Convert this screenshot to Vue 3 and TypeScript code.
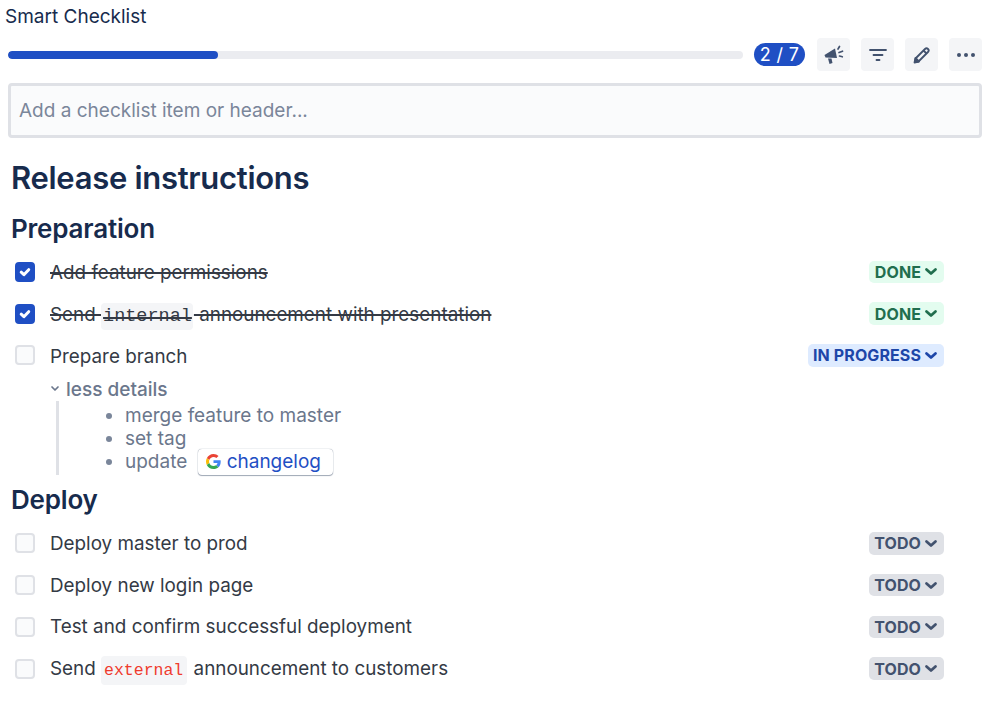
<script setup lang="ts">
interface Item { text?: string; before?: string; code?: string; after?: string; codeRed?: boolean; done?: boolean; status: string; kind: string }
const prep: Item[] = [
  { text: 'Add feature permissions', done: true, status: 'DONE', kind: 'done' },
  { before: 'Send ', code: 'internal', after: ' announcement with presentation', done: true, status: 'DONE', kind: 'done' },
  { text: 'Prepare branch', status: 'IN PROGRESS', kind: 'progress' },
]
const deploy: Item[] = [
  { text: 'Deploy master to prod', status: 'TODO', kind: 'todo' },
  { text: 'Deploy new login page', status: 'TODO', kind: 'todo' },
  { text: 'Test and confirm successful deployment', status: 'TODO', kind: 'todo' },
  { before: 'Send ', code: 'external', after: ' announcement to customers', codeRed: true, status: 'TODO', kind: 'todo' },
]
</script>

<template>
  <div class="page">
    <div class="title">Smart Checklist</div>
    <div class="toolbar">
      <div class="track"><div class="fill" :style="{ width: (2 / 7) * 100 + '%' }"></div></div>
      <span class="count">2 / 7</span>
      <button class="tool">
        <svg width="22" height="22" viewBox="0 0 22 22" fill="#42526e">
          <path d="M1.500 11 12 4.500l2 9.500-11.500-.5z" />
          <path d="M5 14.500h3.500l1 4.500-3 1z" />
          <path d="M15 5 16.500 2.500M16 8.500l3.500-1.300M16.500 12l2.800.8" stroke="#42526e" stroke-width="1.700" stroke-linecap="round" fill="none" />
        </svg>
      </button>
      <button class="tool">
        <svg width="22" height="22" viewBox="0 0 22 22" fill="none" stroke="#42526e" stroke-width="1.800" stroke-linecap="round">
          <path d="M3 6h16M6.500 11h9M9.500 16h3" />
        </svg>
      </button>
      <button class="tool">
        <svg width="22" height="22" viewBox="0 0 22 22" fill="none" stroke="#42526e" stroke-width="1.800" stroke-linejoin="round">
          <path d="M4.500 14.500 14 5a2 2 0 0 1 3 3l-9.500 9.500-3.500.5z" />
          <path d="m12.500 6.500 3 3" />
          <path d="M3.500 18.500 8 17.500 4.500 14z" fill="#42526e" />
        </svg>
      </button>
      <button class="tool">
        <svg width="22" height="22" viewBox="0 0 22 22" fill="#42526e">
          <circle cx="4" cy="11" r="2" /><circle cx="11" cy="11" r="2" /><circle cx="18" cy="11" r="2" />
        </svg>
      </button>
    </div>
    <div class="entry">Add a checklist item or header...</div>

    <h1 class="h1">Release instructions</h1>
    <h2 class="h2">Preparation</h2>
    <div v-for="item in prep" :key="item.status + (item.text || item.code)" class="row">
      <span class="box" :class="{ checked: item.done }">
        <svg v-if="item.done" width="14" height="14" viewBox="0 0 14 14" fill="none" stroke="#fff" stroke-width="3" stroke-linecap="round" stroke-linejoin="round">
          <path d="m3.200 7.200 2.700 2.500 4.800-5" />
        </svg>
      </span>
      <span class="label lowered" :class="{ struck: item.done }">
        <template v-if="item.text">{{ item.text }}</template>
        <template v-else>{{ item.before }}<code class="code">{{ item.code }}</code>{{ item.after }}</template>
      </span>
      <span class="status" :class="item.kind">{{ item.status }}
        <svg class="chev" width="14" height="9" viewBox="0 0 14 9" fill="none" stroke="currentColor" stroke-width="2.800" stroke-linecap="round" stroke-linejoin="round"><path d="m2.500 2.500 4.500 4 4.500-4" /></svg>
      </span>
    </div>
    <div class="details">
      <div class="toggle">
        <svg width="10" height="8" viewBox="0 0 10 8" fill="none" stroke="#6b778c" stroke-width="1.700" stroke-linecap="round" stroke-linejoin="round"><path d="m2 2 3 3 3-3" /></svg>
        <span>less details</span>
      </div>
      <ul class="list">
        <li>merge feature to master</li>
        <li>set tag</li>
        <li>update <span class="chip">
          <svg width="15" height="15" viewBox="0 0 48 48">
            <path fill="#EA4335" d="M24 9.500c3.500 0 6.700 1.200 9.200 3.600l6.900-6.900C35.900 2.400 30.500 0 24 0 14.600 0 6.500 5.400 2.600 13.200l8 6.200C12.500 13.700 17.800 9.500 24 9.500z" />
            <path fill="#4285F4" d="M47 24.500c0-1.600-.1-3.100-.4-4.500H24v9h12.900c-.6 3-2.200 5.500-4.700 7.200l7.700 6C44.400 38 47 31.800 47 24.500z" />
            <path fill="#FBBC05" d="M10.600 28.600c-.5-1.500-.8-3-.8-4.600s.3-3.100.8-4.600l-8-6.200C.9 16.500 0 20.100 0 24s.9 7.500 2.600 10.800z" />
            <path fill="#34A853" d="M24 48c6.500 0 11.900-2.100 15.900-5.800l-7.700-6c-2.200 1.500-4.900 2.300-8.200 2.300-6.200 0-11.500-4.200-13.400-9.900l-8 6.200C6.500 42.600 14.600 48 24 48z" />
          </svg>
          <span>changelog</span></span></li>
      </ul>
    </div>
    <h2 class="h2 deploy">Deploy</h2>
    <div v-for="item in deploy" :key="item.text || item.code" class="row">
      <span class="box"></span>
      <span class="label">
        <template v-if="item.text">{{ item.text }}</template>
        <template v-else>{{ item.before }}<code class="code red">{{ item.code }}</code>{{ item.after }}</template>
      </span>
      <span class="status" :class="item.kind">{{ item.status }}
        <svg class="chev" width="14" height="9" viewBox="0 0 14 9" fill="none" stroke="currentColor" stroke-width="2.800" stroke-linecap="round" stroke-linejoin="round"><path d="m2.500 2.500 4.500 4 4.500-4" /></svg>
      </span>
    </div>
  </div>
</template>

<style scoped>
.page { width: 999px; height: 710px; overflow: hidden; box-sizing: border-box; padding: 5px 17px 0 8px; font-family: Inter, "Liberation Sans", sans-serif; color: #172b4d; background: #fff; }
.title { margin-left: -3px; font-size: 19px; line-height: 24px; color: #172b4d; }
.toolbar { display: flex; align-items: center; margin-top: 9px; height: 33px; }
.track { flex: none; width: 735px; height: 8px; border-radius: 4px; background: #ebecf0; overflow: hidden; }
.fill { height: 100%; background: #1f4fc4; border-radius: 4px; }
.count { flex: none; margin-left: 11px; margin-right: 12px; width: 51px; height: 23px; border-radius: 12px; background: #1f4fc4; color: #fff; font-size: 18px; line-height: 23px; letter-spacing: 0.300px; text-align: center; }
.tool { flex: none; width: 33px; height: 33px; padding: 0; margin-right: 11px; border: 0; border-radius: 4px; background: #f4f5f7; display: flex; align-items: center; justify-content: center; }
.tool:last-child { margin-right: 0; }
.entry { margin-top: 12px; width: 974px; height: 55px; box-sizing: border-box; border: 3px solid #dfe1e6; border-radius: 4px; background: #fafbfc; padding-left: 8px; color: #7a869a; font-size: 19px; line-height: 49px; }
.h1 { margin: 20px 0 0 3px; font-size: 31px; line-height: 40px; font-weight: 600; letter-spacing: -0.300px; color: #172b4d; }
.h2 { margin: 13px 0 0 3px; font-size: 26px; line-height: 36px; font-weight: 600; letter-spacing: -0.200px; color: #172b4d; }
.row { display: flex; align-items: center; height: 41.800px; width: 936px; font-size: 18.850px; color: #343a45; }
.h2 + .row { margin-top: 4px; }
.box { flex: none; margin-left: 7px; width: 20px; height: 20px; box-sizing: border-box; border: 2px solid #dfe1e6; border-radius: 4px; background: #fafbfc; display: flex; align-items: center; justify-content: center; }
.box.checked { background: #1f4fc4; border-color: #1f4fc4; }
.label { margin-left: 15px; flex: 1; white-space: pre; }
.lowered { padding-top: 2px; }
.struck { text-decoration: line-through; text-decoration-thickness: 1.500px; }
.code { font-family: "Liberation Mono", monospace; font-size: 18.500px; font-weight: 400; background: #f4f5f7; border-radius: 4px; padding: 3px 1px 3px 2px; margin: 0 1px 0 0; }
.code.red { font-size: 16.500px; font-weight: 400; color: #ef3b2d; padding: 5px 4px 5px 3px; margin: 0 1px 0 0; }
.status { display: inline-flex; align-items: center; gap: 3px; height: 22.500px; padding: 0 6px 0 5.500px; border-radius: 5px; font-size: 16px; font-weight: 700; letter-spacing: 0.100px; white-space: nowrap; }
.chev { flex: none; }
.done { background: #e3fcef; color: #216e4e; }
.progress { background: #deebff; color: #1d46a8; }
.todo { background: #dfe1e6; color: #42526e; }
.details { margin-left: 42px; margin-top: 1px; color: #6b778c; }
.toggle { display: flex; align-items: center; gap: 6px; height: 24px; font-size: 19px; font-weight: 500; }
.list { margin: 0 0 0 6px; padding: 3px 0 0 66px; border-left: 3px solid #dfe1e6; font-size: 19px; line-height: 23px; height: 74px; box-sizing: border-box; }
.list li { height: 23px; white-space: nowrap; }
.list li::marker { color: #7a869a; }
.chip { display: inline-flex; align-items: center; gap: 6px; height: 26px; margin: -4px 0 -4px 5px; padding: 0 12px 0 8px; background: #fff; border-radius: 4px; box-shadow: 0 0 1px #6b778c, 0 1px 1px #a5adba; color: #1f4fc4; vertical-align: -1px; }
.deploy { margin-top: 7px; }
</style>
